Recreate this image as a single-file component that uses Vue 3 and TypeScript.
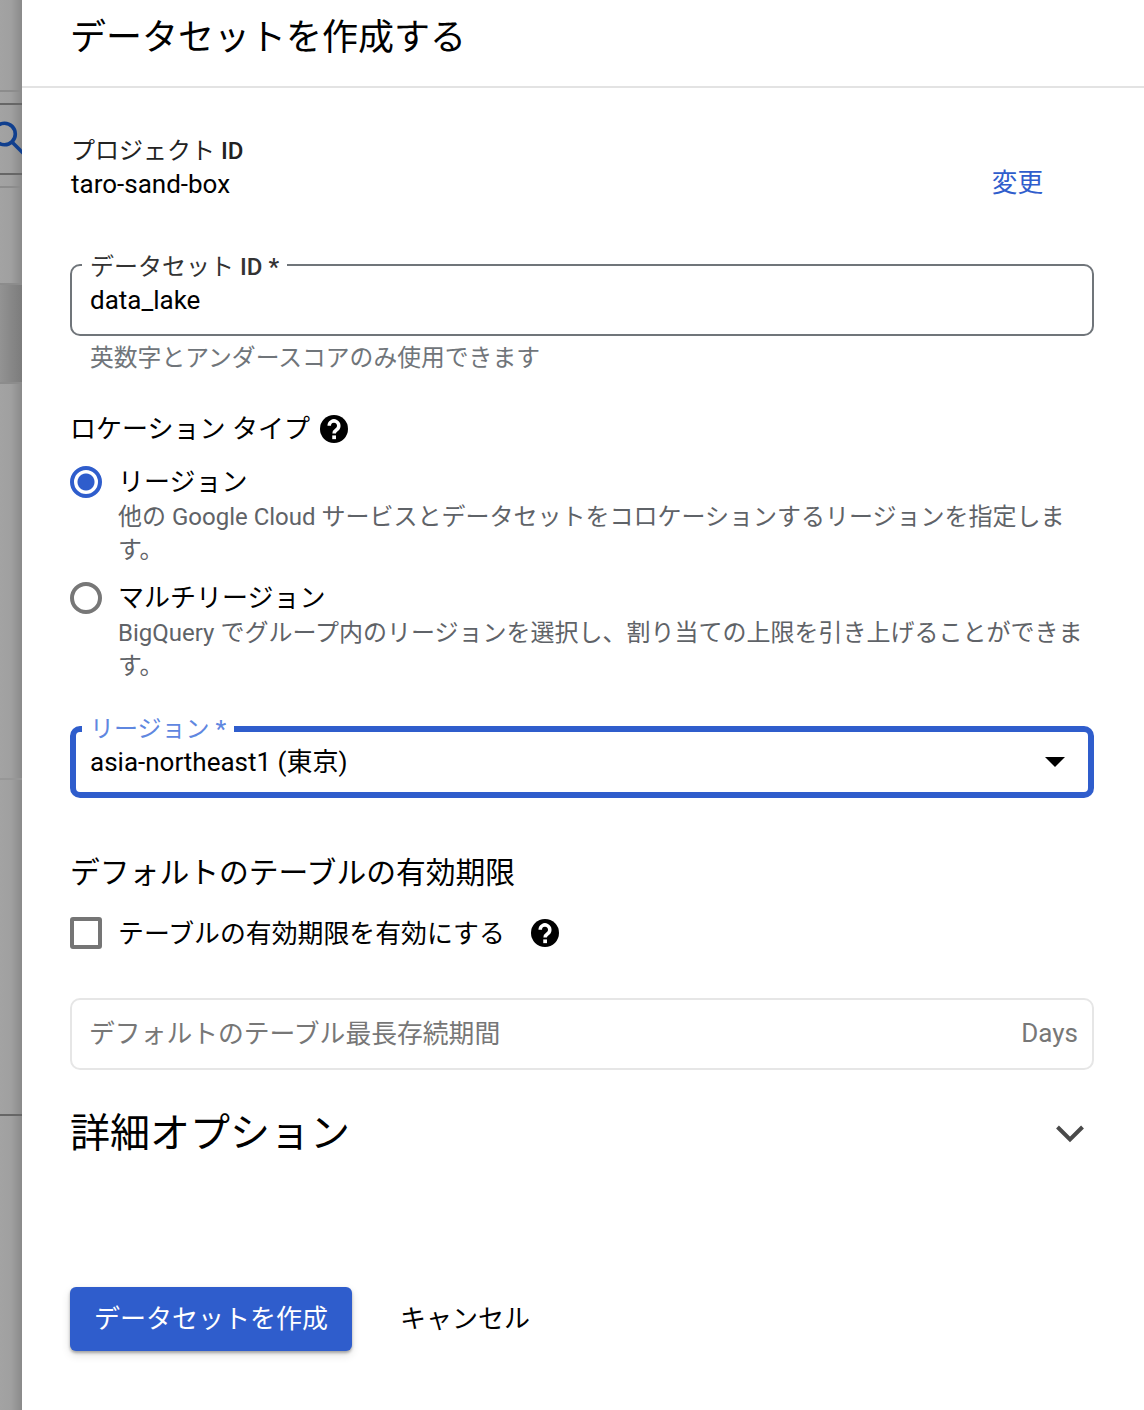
<script setup lang="ts">
const locationTypes = [
  {
    label: 'リージョン',
    desc: '他の Google Cloud サービスとデータセットをコロケーションするリージョンを指定します。',
    checked: true
  },
  {
    label: 'マルチリージョン',
    desc: 'BigQuery でグループ内のリージョンを選択し、割り当ての上限を引き上げることができます。',
    checked: false
  }
]

// page lines showing through the scrim on the left
const backdropRules = [
  { top: 90, kind: 'mid' },
  { top: 103, kind: 'dark' },
  { top: 173, kind: 'dark' },
  { top: 186, kind: 'mid' },
  { top: 283, kind: 'mid' },
  { top: 382, kind: 'mid' },
  { top: 778, kind: 'faint' },
  { top: 1114, kind: 'dark' }
]
</script>

<template>
  <div class="page">
    <aside class="scrim">
      <i class="block"></i>
      <i
        v-for="rule in backdropRules"
        :key="rule.top"
        class="rule"
        :class="rule.kind"
        :style="{ top: `${rule.top}px` }"
      ></i>
      <svg class="search" width="30" height="40" viewBox="0 0 30 40">
        <circle cx="4.500" cy="14" r="10.800" fill="none" stroke="#103f8e" stroke-width="3.600" />
        <path d="M12 22l13 13" fill="none" stroke="#103f8e" stroke-width="3.600" />
      </svg>
    </aside>

    <main class="panel">
      <header class="head">データセットを作成する</header>

      <section class="body">
        <div class="project">
          <div>
            <div class="project-label">プロジェクト <b>ID</b></div>
            <div class="project-value">taro-sand-box</div>
          </div>
          <a class="change">変更</a>
        </div>

        <div class="field outlined">
          <span class="notch">データセット <b>ID *</b></span>
          <span>data_lake</span>
        </div>
        <div class="hint">英数字とアンダースコアのみ使用できます</div>

        <div class="group-title">
          ロケーション タイプ
          <svg class="help" width="28" height="28" viewBox="0 0 24 24">
            <circle cx="12" cy="12" r="12" fill="#000" />
            <path d="M7.900 9.200a4.100 4.100 0 1 1 6.500 3.300c-1.500 1.100-2.300 1.600-2.300 3.300" fill="none" stroke="#fff" stroke-width="3" />
            <rect x="10.500" y="17.500" width="3.200" height="3.200" fill="#fff" />
          </svg>
        </div>

        <div class="radios">
          <div v-for="item in locationTypes" :key="item.label" class="radio-row">
            <span class="radio" :class="{ on: item.checked }"></span>
            <div>
              <div class="radio-label">{{ item.label }}</div>
              <div class="radio-desc">{{ item.desc }}</div>
            </div>
          </div>
        </div>

        <div class="field focused">
          <span class="notch">リージョン <b>*</b></span>
          <span>asia-northeast1 (東京)</span>
          <span class="caret"></span>
        </div>

        <div class="expiry-title">デフォルトのテーブルの有効期限</div>
        <div class="check-row">
          <span class="check"></span>
          <span class="check-label">テーブルの有効期限を有効にする</span>
          <svg class="help" width="28" height="28" viewBox="0 0 24 24">
            <circle cx="12" cy="12" r="12" fill="#000" />
            <path d="M7.900 9.200a4.100 4.100 0 1 1 6.500 3.300c-1.500 1.100-2.300 1.600-2.300 3.300" fill="none" stroke="#fff" stroke-width="3" />
            <rect x="10.500" y="17.500" width="3.200" height="3.200" fill="#fff" />
          </svg>
        </div>

        <div class="field disabled">
          <span class="placeholder">デフォルトのテーブル最長存続期間</span>
          <span class="suffix">Days</span>
        </div>

        <div class="advanced">
          <span>詳細オプション</span>
          <svg width="32" height="20" viewBox="0 0 32 20">
            <path d="M3.500 4L16 16.500 28.500 4" fill="none" stroke="#4a4a4a" stroke-width="4" />
          </svg>
        </div>

        <div class="actions">
          <button class="primary">データセットを作成</button>
          <button class="ghost">キャンセル</button>
        </div>
      </section>
    </main>
  </div>
</template>

<style>
html, body {
  margin: 0;
  background: #fff;
}
</style>

<style scoped>
.page {
  display: flex;
  width: 1144px;
  height: 1410px;
  overflow: hidden;
  font-family: Roboto, "Noto Sans CJK JP", sans-serif;
  color: #000;
  background: #fff;
}

b {
  font-weight: 500;
}

.scrim {
  position: relative;
  flex: 0 0 22px;
  overflow: hidden;
  background: linear-gradient(90deg, #a3a3a3 0, #a0a0a0 50%, #8a8a8a 100%);
}

.rule {
  position: absolute;
  left: 0;
  right: 0;
  height: 2px;
}

.rule.mid {
  background: #8c8c8c;
}

.rule.dark {
  background: #666;
}

.rule.faint {
  background: #979797;
}

.block {
  position: absolute;
  top: 284px;
  left: 0;
  right: 0;
  height: 99px;
  background: linear-gradient(90deg, #939393, #7c7c7c);
}

.search {
  position: absolute;
  left: 0;
  top: 120px;
}

.panel {
  flex: 1;
  min-width: 0;
}

.head {
  box-sizing: border-box;
  height: 88px;
  padding: 12px 0 0 48px;
  font-size: 36px;
  line-height: 52px;
  border-bottom: 2px solid #e3e3e3;
}

.body {
  padding: 0 50px 0 48px;
}

.project {
  display: flex;
  justify-content: space-between;
  align-items: flex-end;
  padding-top: 46px;
}

.project-label {
  padding-left: 1px;
  font-size: 24px;
  line-height: 34px;
  color: #222;
}

.project-value {
  padding-left: 1px;
  font-size: 26px;
  line-height: 32px;
}

.change {
  margin: 0 51px -1px 0;
  font-size: 25.600px;
  line-height: 36px;
  color: #2f5dcc;
}

.field {
  position: relative;
  box-sizing: border-box;
  display: flex;
  align-items: center;
  height: 72px;
  padding: 0 18px;
  font-size: 26px;
  border-radius: 10px;
}

.outlined {
  margin-top: 64px;
  border: 2px solid #70757a;
}

.focused {
  margin-top: 43px;
  border: 6px solid #2f5dcc;
  padding: 0 14px 6px;
}

.disabled {
  margin-top: 48px;
  justify-content: space-between;
  border: 2px solid #e6e6e6;
  color: #777;
  padding: 0 14px 2px 17px;
}

.placeholder {
  margin-top: -4px;
  font-size: 25.800px;
}

.notch {
  position: absolute;
  top: -14px;
  left: 10px;
  padding: 0 8px;
  font-size: 24px;
  line-height: 30px;
  background: #fff;
  color: #333;
}

.focused .notch {
  top: -18px;
  left: 6px;
  color: #5f87e0;
}

.caret {
  position: absolute;
  right: 23px;
  top: 25px;
  border-style: solid;
  border-width: 10px 10px 0;
  border-color: #000 transparent transparent;
}

.hint {
  padding: 4px 0 0 20px;
  font-size: 23.800px;
  line-height: 36px;
  color: #70757a;
}

.group-title {
  display: flex;
  align-items: center;
  gap: 10px;
  margin-top: 35px;
  font-size: 26px;
  line-height: 36px;
}

.radios {
  margin-top: 17px;
}

.radio-row {
  display: flex;
  gap: 16px;
  margin-bottom: 13px;
}

.radio {
  flex: none;
  box-sizing: border-box;
  width: 32px;
  height: 32px;
  margin-top: 2px;
  border: 4px solid #777;
  border-radius: 50%;
}

.radio.on {
  border-color: #2f5dcc;
  background: radial-gradient(circle, #2f5dcc 0 8px, #fff 9px);
}

.radio-label {
  font-size: 26px;
  line-height: 37px;
}

.radio-desc {
  font-size: 24px;
  line-height: 33px;
  color: #5f6368;
}

.expiry-title {
  margin-top: 53px;
  font-size: 29.800px;
  line-height: 44px;
}

.check-row {
  display: flex;
  align-items: center;
  margin-top: 20px;
  font-size: 25.880px;
}

.check-label {
  margin-top: -2px;
}

.check {
  box-sizing: border-box;
  width: 32px;
  height: 32px;
  margin-right: 16px;
  border: 4px solid #757575;
  border-radius: 3px;
}

.check-row .help {
  margin-left: 26px;
}

.advanced {
  display: flex;
  align-items: center;
  justify-content: space-between;
  margin-top: 40px;
  padding-right: 8px;
  font-size: 40px;
  line-height: 48px;
}

.advanced svg {
  margin-bottom: 2px;
}

.actions {
  display: flex;
  align-items: center;
  gap: 48px;
  margin-top: 129px;
}

.primary {
  width: 282px;
  height: 64px;
  padding: 0 0 6px;
  border: 0;
  border-radius: 6px;
  background: #2f5dcc;
  color: #fff;
  font: inherit;
  font-size: 26px;
  box-shadow: 0 2px 3px rgba(0, 0, 0, 0.3), 0 4px 10px rgba(0, 0, 0, 0.12);
}

.ghost {
  padding: 0 0 6px;
  border: 0;
  background: none;
  color: #000;
  font: inherit;
  font-size: 26px;
}
</style>
